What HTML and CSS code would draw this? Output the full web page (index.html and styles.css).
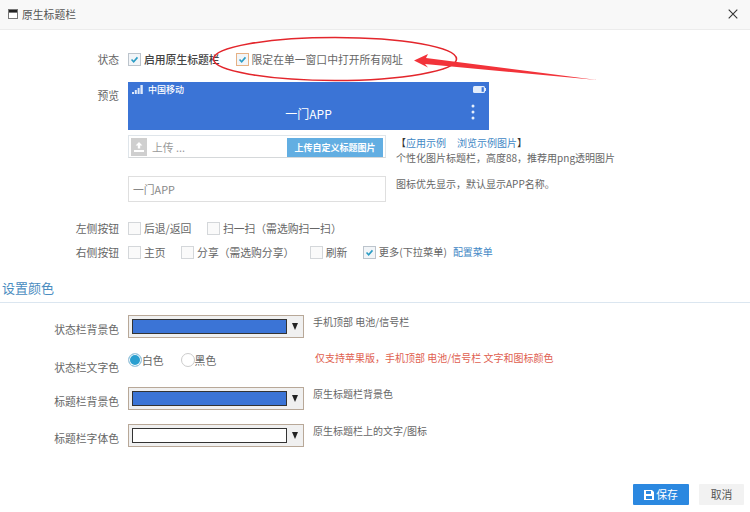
FILE: index.html
```html
<!DOCTYPE html>
<html lang="zh">
<head>
<meta charset="utf-8">
<title>原生标题栏</title>
<link rel="stylesheet" href="styles.css">
</head>
<body>
<div class="dialog">
  <header class="head">
    <div class="head-title">
      <svg class="head-icon" width="10" height="10" viewBox="0 0 10 10"><rect x=".5" y=".5" width="9" height="9" fill="#fff" stroke="#777"/><rect x="1" y="1" width="8" height="2.6" fill="#222"/></svg>
      <span>原生标题栏</span>
    </div>
    <svg class="close" width="10" height="10" viewBox="0 0 10 10"><path d="M.7.7l8.6 8.6M9.3.7L.7 9.3" stroke="#333" stroke-width="1.1" fill="none"/></svg>
  </header>

  <main class="form">
    <div class="row row-status">
      <div class="label">状态</div>
      <div class="opts">
        <label class="opt"><span class="cb on"><svg viewBox="0 0 13 13"><path d="M3 6.5l2.5 2.6L10 4" /></svg></span><b>启用原生标题栏</b></label>
        <label class="opt"><span class="cb on focus"><svg viewBox="0 0 13 13"><path d="M3 6.5l2.5 2.6L10 4" /></svg></span><span>限定在单一窗口中打开所有网址</span></label>
      </div>
    </div>

    <div class="row row-preview">
      <div class="label label-preview">预览</div>
      <div class="content">
        <div class="phone">
          <div class="phone-status">
            <div class="carrier">
              <svg width="12" height="9" viewBox="0 0 12 9"><path d="M0 7h2v2H0zM2.8 5h2v4h-2zM5.6 3h2v6h-2zM8.4 0h2.400v9H8.400z" fill="#dfe9fa"/></svg>
              <span>中国移动</span>
            </div>
            <svg width="13" height="7" viewBox="0 0 13 7"><rect width="12" height="7" rx="1.5" fill="#e4edfb"/><rect x="8.6" y="1.2" width="2.2" height="4.6" fill="#3b74d6"/><rect x="12" y="2" width="1" height="3" fill="#e4edfb"/></svg>
          </div>
          <div class="phone-title">
            <span>一门APP</span>
            <svg class="dots" width="4" height="16" viewBox="0 0 4 16"><circle cx="2" cy="2" r="1.5"/><circle cx="2" cy="8" r="1.5"/><circle cx="2" cy="14" r="1.5"/></svg>
          </div>
        </div>
        <div class="pair pair-upload">
          <div class="upload">
            <span class="up-icon"><svg width="10" height="10" viewBox="0 0 10 10"><path d="M5 0l3.4 3.6H6.2v3H3.8v-3H1.6zM0 8h10v2H0z" fill="#fff"/></svg></span>
            <span class="up-text">上传 ...</span>
            <span class="up-btn">上传自定义标题图片</span>
          </div>
          <div class="note">
            <div class="links">【<a>应用示例</a><a class="second">浏览示例图片</a>】</div>
            <div>个性化图片标题栏，高度88，推荐用png透明图片</div>
          </div>
        </div>
        <div class="pair pair-title">
          <div class="title-input">一门APP</div>
          <div class="note">图标优先显示，默认显示APP名称。</div>
        </div>
      </div>
    </div>

    <div class="row row-left">
      <div class="label">左侧按钮</div>
      <div class="opts opts-tight">
        <label class="opt"><span class="cb"></span><span>后退/返回</span></label>
        <label class="opt"><span class="cb"></span><span>扫一扫（需选购扫一扫）</span></label>
      </div>
    </div>
    <div class="row row-right">
      <div class="label">右侧按钮</div>
      <div class="opts opts-tight">
        <label class="opt"><span class="cb"></span><span>主页</span></label>
        <label class="opt"><span class="cb"></span><span>分享（需选购分享）</span></label>
        <label class="opt"><span class="cb"></span><span>刷新</span></label>
        <label class="opt opt-more"><span class="cb on"><svg viewBox="0 0 13 13"><path d="M3 6.5l2.5 2.6L10 4" /></svg></span><span>更多(下拉菜单)</span><a>配置菜单</a></label>
      </div>
    </div>

    <h2 class="section">设置颜色</h2>

    <div class="row color-row first">
      <div class="label">状态栏背景色</div>
      <div class="picker"><span class="swatch blue"></span><span class="caret"></span></div>
      <div class="hint">手机顶部 电池/信号栏</div>
    </div>
    <div class="row color-row radio-row">
      <div class="label">状态栏文字色</div>
      <div class="radios">
        <label class="radio"><span class="dot on"></span>白色</label>
        <label class="radio"><span class="dot"></span>黑色</label>
      </div>
      <div class="hint warn">仅支持苹果版，手机顶部 电池/信号栏 文字和图标颜色</div>
    </div>
    <div class="row color-row third">
      <div class="label">标题栏背景色</div>
      <div class="picker"><span class="swatch blue"></span><span class="caret"></span></div>
      <div class="hint">原生标题栏背景色</div>
    </div>
    <div class="row color-row fourth">
      <div class="label">标题栏字体色</div>
      <div class="picker"><span class="swatch"></span><span class="caret"></span></div>
      <div class="hint">原生标题栏上的文字/图标</div>
    </div>
  </main>

  <footer class="foot">
    <button class="btn primary"><svg width="10" height="10" viewBox="0 0 10 10"><path d="M0 0h8l2 2v8H0zM2 1v3h5V1zM2 6v3h6V6z" fill="#fff" fill-rule="evenodd"/></svg>保存</button>
    <button class="btn">取消</button>
  </footer>

  <svg class="mark" width="750" height="512" viewBox="0 0 750 512">
    <ellipse cx="335" cy="59" rx="121.5" ry="21.5" fill="none" stroke="#e3262c" stroke-width="1.6"/>
    <path d="M414 60.5l14-6.500-2 4 171 22-172-16 3 3.500z" fill="#f2333a"/>
  </svg>
</div>
</body>
</html>
```

FILE: styles.css
```css
* { box-sizing: border-box; }
html, body { margin: 0; padding: 0; }
body {
  width: 750px;
  height: 512px;
  overflow: hidden;
  background: #fff;
  color: #666;
  font: 10.8px/14px "Noto Sans CJK SC", "Liberation Sans", sans-serif;
}
a { color: #3f88c5; }
b { color: #444; font-weight: 500; }

.dialog { position: relative; width: 750px; height: 512px; display: flex; flex-direction: column; }

.head {
  height: 30px;
  flex: none;
  display: flex;
  align-items: center;
  justify-content: space-between;
  padding: 0 12px 1px 8px;
  background: #f8f8f8;
  border-bottom: 1px solid #ececec;
}
.head-title { display: flex; align-items: center; gap: 4px; color: #555; }
.head-icon { display: block; }
.close { display: block; }

.form { flex: 1; padding-top: 22px; }
.row { display: flex; }
.label { width: 119px; flex: none; margin-right: 9px; text-align: right; color: #666; }

.opts { display: flex; gap: 16px; align-items: center; height: 14px; }
.opts-tight { gap: 15.5px; }
.opt { display: flex; align-items: center; gap: 3px; white-space: nowrap; }
.opt-more { font-size: 10.2px; }
.opt-more a { margin-left: 3px; font-size: 10px; }
.cb {
  width: 13px;
  height: 13px;
  flex: none;
  border: 1px solid #d4d7da;
  background: #fafafa;
  display: block;
}
.cb.on { border-color: #bcc4cc; background: #f2f5f8; }
.cb.focus { border-color: #e6b184; }
.cb svg { display: block; width: 11px; height: 11px; }
.cb path { fill: none; stroke: #2a9cc4; stroke-width: 1.9; }

.row-preview { margin-top: 16px; }
.label-preview { padding-top: 6px; }
.content { display: flex; flex-direction: column; }

.phone { width: 361px; height: 48px; background: #3b74d6; color: #fff; padding: 3px 3px 0 4px; }
.phone-status { display: flex; justify-content: space-between; align-items: center; height: 9px; }
.carrier { display: flex; align-items: center; gap: 4px; font-size: 9px; font-weight: 500; line-height: 9px; }
.phone-title {
  position: relative;
  display: flex;
  justify-content: center;
  margin-top: 12px;
  padding-right: 1px;
  font-size: 12px;
  line-height: 16px;
}
.dots { position: absolute; right: 11px; top: -2px; fill: #e6effc; }

.pair { display: flex; align-items: flex-start; gap: 10px; }
.pair-upload { margin-top: 5px; }
.pair-title { margin-top: 11px; }

.upload {
  width: 258px;
  height: 23px;
  flex: none;
  display: flex;
  align-items: center;
  padding: 1px 2px 0 2px;
  border: 1px solid #dfe5ea;
  border-bottom-color: #d5d8da;
}
.up-icon { width: 16px; height: 18px; background: #cfcfcf; display: flex; align-items: center; justify-content: center; }
.up-text { margin-left: 5px; color: #999; }
.up-btn {
  margin-left: auto;
  width: 96px;
  height: 19px;
  background: #62aee2;
  color: #fff;
  font-size: 9px;
  font-weight: 700;
  line-height: 19px;
  text-align: center;
  white-space: nowrap;
}
.note { line-height: 15px; color: #666; white-space: nowrap; font-size: 10px; }
.links { color: #333; }
.links a { color: #3f88c5; }
.links .second { margin-left: 11px; }

.title-input {
  width: 258px;
  height: 26px;
  flex: none;
  border: 1px solid #dfdfdf;
  padding: 0 4px;
  line-height: 24px;
  color: #888;
}

.row-left { margin-top: 19px; }
.row-right { margin-top: 10px; }

.section {
  margin: 20px 0 0;
  padding: 0 0 5px 2px;
  height: 24px;
  border-bottom: 1px solid #dbe6f0;
  color: #4a8cc0;
  font-size: 13px;
  font-weight: 400;
  line-height: 18px;
}

.color-row { align-items: flex-start; }
.color-row .label { padding-top: 7px; }
.first { margin-top: 12px; }
.radio-row { margin-top: 15px; }
.third { margin-top: 13px; }
.fourth { margin-top: 14px; }

.picker {
  width: 176px;
  height: 23px;
  flex: none;
  display: flex;
  align-items: center;
  padding: 0 0 0 3px;
  border: 1px solid #b8a898;
  background: #f0f0f0;
}
.swatch { width: 155px; height: 15px; background: #fff; border: 1px solid #333; display: block; }
.swatch.blue { background: #3b74d6; }
.caret {
  margin-left: 5px;
  width: 0;
  height: 0;
  border-left: 3.5px solid transparent;
  border-right: 3.5px solid transparent;
  border-top: 7px solid #222;
}
.hint { margin-left: 9px; color: #666; white-space: nowrap; font-size: 10px; }
.warn { color: #e0604f; margin: -2px 0 0; }

.radios { width: 187px; flex: none; display: flex; gap: 17px; height: 14px; align-items: center; }
.radio { display: flex; align-items: center; gap: 0; }
.dot { width: 14px; height: 14px; border-radius: 50%; border: 1px solid #ccc; background: #fff; display: block; }
.dot.on { background: #2a9fd0; box-shadow: inset 0 0 0 1px #fff; border-color: #a9c9dd; }

.foot { flex: none; display: flex; justify-content: flex-end; gap: 10px; padding: 0 6px 7px 0; }
.btn {
  height: 21px;
  width: 45px;
  padding: 0;
  border: 0;
  border-radius: 1px;
  background: #f2f2f2;
  color: #555;
  font: inherit;
  line-height: 21px;
  display: flex;
  align-items: center;
  justify-content: center;
  gap: 2px;
}
.primary { width: 56px; background: #2b88e0; color: #fff; }

.mark { position: absolute; left: 0; top: 0; pointer-events: none; }
```
